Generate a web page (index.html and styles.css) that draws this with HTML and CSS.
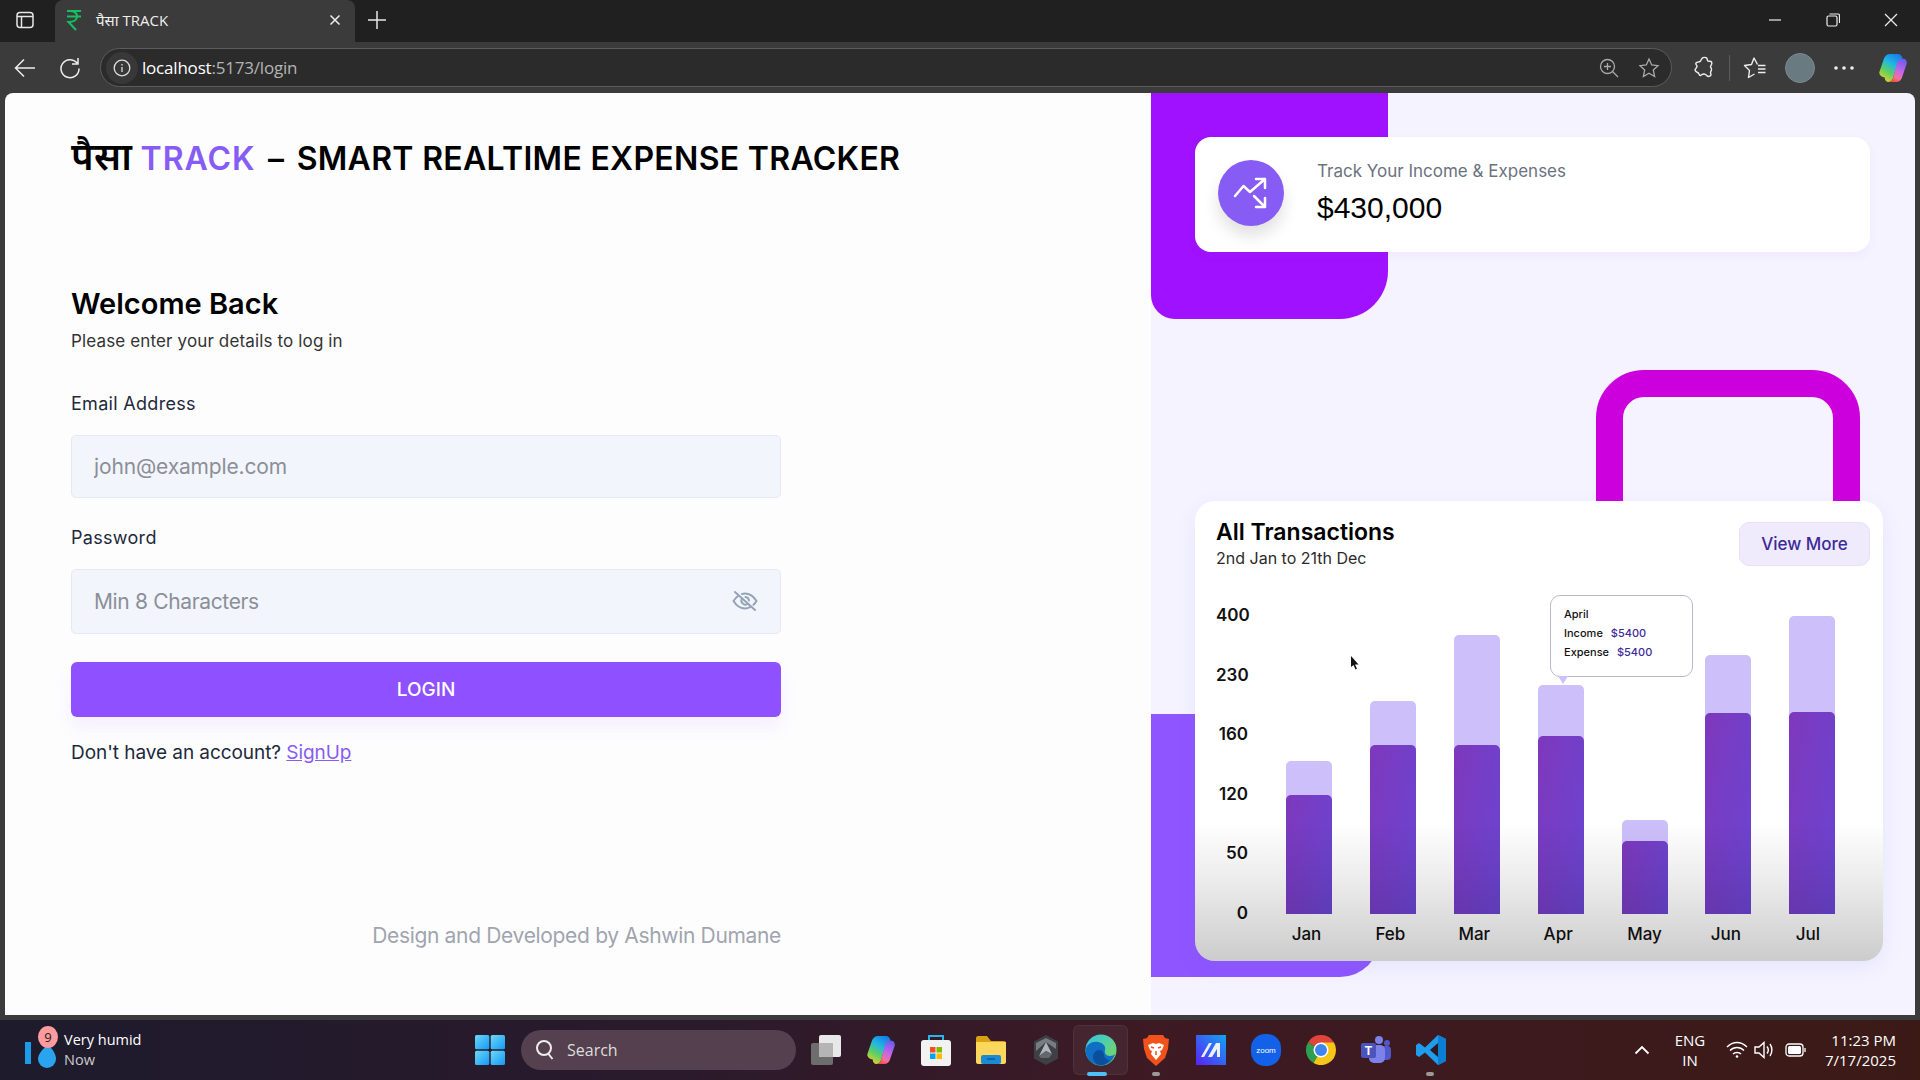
FILE: index.html
```html
<!DOCTYPE html>
<html lang="en">
	<head>
		<meta charset="UTF-8" />
		<title>पैसा TRACK</title>
		<link rel="stylesheet" href="styles.css">
	</head>
	<body>
		<svg class="defs" width="0" height="0">
			<defs>
				<linearGradient id="copilotA" x1="0.7" y1="0" x2="0.2" y2="1">
					<stop offset="0" stop-color="#1681ea" />
					<stop offset=".35" stop-color="#22b8e0" />
					<stop offset=".65" stop-color="#5fd060" />
					<stop offset="1" stop-color="#f2cf2a" />
				</linearGradient>
				<linearGradient id="copilotB" x1="0.7" y1="0" x2="0.3" y2="1">
					<stop offset="0" stop-color="#6a5cf0" />
					<stop offset=".5" stop-color="#c766e6" />
					<stop offset=".8" stop-color="#f2709a" />
					<stop offset="1" stop-color="#f2503a" />
				</linearGradient>
				<linearGradient id="edgeA" x1="0" y1="0" x2="1" y2="1">
					<stop offset="0" stop-color="#2fc4e8" />
					<stop offset="1" stop-color="#7ed957" />
				</linearGradient>
				<linearGradient id="winA" x1="0" y1="0" x2="1" y2="1">
					<stop offset="0" stop-color="#6fd8f7" />
					<stop offset="1" stop-color="#1299f5" />
				</linearGradient>
				<linearGradient id="mApp" x1="1" y1="0" x2="0" y2="1">
					<stop offset="0" stop-color="#12a4f2" />
					<stop offset="1" stop-color="#5a22f5" />
				</linearGradient>
				<symbol id="copilot" viewBox="0 0 30 32">
					<path d="M12 1h8c3 0 5 2 5.500 6L24 8c-2 0-4 1.500-4.500 4L15 27c-.5 2-2 4-5 4-2 0-3.500-1.500-4-4.500L6 26c-3 0-6.500-2.500-5.500-6L5 7c1-4 3.500-6 7-6z" fill="url(#copilotA)" />
					<path d="M18 31h-8c3 0 4.500-2 5-4l4.500-17c.5-2.500 2.500-4 4.500-4h2c3 0 4.500 3 3.500 6L25 25c-1 4-3.500 6-7 6z" fill="url(#copilotB)" />
				</symbol>
			</defs>
		</svg>

		<div class="tabstrip">
			<svg class="sidebar-icon" width="20" height="20" viewBox="0 0 20 20" fill="none" stroke="#e6e6e6" stroke-width="1.500">
				<rect x="2" y="2.500" width="16" height="15" rx="3" />
				<path d="M2 6.500h16M6.500 6.500v11" />
			</svg>
			<div class="tab">
				<svg width="16" height="22" viewBox="0 0 16 22" fill="none" stroke="#16c060" stroke-width="2">
					<path d="M1 2h14M1 7.500h14M4 2c6 0 7 2.500 7 5.500S8 13 2.500 13L10 21" />
				</svg>
				<span class="tab-title">पैसा TRACK</span>
				<svg class="tab-close" width="12" height="12" viewBox="0 0 12 12" stroke="#eee" stroke-width="1.500">
					<path d="M1.500 1.500l9 9M10.500 1.500l-9 9" />
				</svg>
			</div>
			<svg class="new-tab" width="20" height="20" viewBox="0 0 20 20" stroke="#e6e6e6" stroke-width="1.500">
				<path d="M10 1v18M1 10h18" />
			</svg>
			<div class="win-controls">
				<svg width="14" height="14" viewBox="0 0 14 14" stroke="#eee" stroke-width="1.200"><path d="M1 7h12" /></svg>
				<svg width="14" height="14" viewBox="0 0 14 14" fill="none" stroke="#eee" stroke-width="1.200"><rect x="1" y="3" width="10" height="10" rx="1.500" /><path d="M3.500 1H12c.8 0 1.500.7 1.500 1.500V10" /></svg>
				<svg width="14" height="14" viewBox="0 0 14 14" stroke="#eee" stroke-width="1.200"><path d="M1 1l12 12M13 1L1 13" /></svg>
			</div>
		</div>

		<div class="toolbar">
			<svg class="tool-back" width="22" height="20" viewBox="0 0 22 20" fill="none" stroke="#eee" stroke-width="1.500"><path d="M21 10H2M10 1.500L1.500 10l8.500 8.500" /></svg>
			<svg class="tool-reload" width="22" height="22" viewBox="0 0 22 22" fill="none" stroke="#eee" stroke-width="1.500"><path d="M18 6a9 9 0 1 0 2 5.500M19 1v6h-6" /></svg>
			<div class="address">
				<span class="site-info">
					<svg width="18" height="18" viewBox="0 0 18 18" fill="none" stroke="#ddd" stroke-width="1.300"><circle cx="9" cy="9" r="7.800" /><path d="M9 8v5M9 5v1.500" /></svg>
				</span>
				<span class="url"><b>localhost</b>:5173/login</span>
				<svg class="addr-zoom" width="20" height="20" viewBox="0 0 20 20" fill="none" stroke="#aaa" stroke-width="1.300"><circle cx="8.500" cy="8.500" r="7" /><path d="M13.500 13.500L19 19M8.500 5v7M5 8.500h7" /></svg>
				<svg class="addr-star" width="22" height="22" viewBox="0 0 22 22" fill="none" stroke="#aaa" stroke-width="1.300"><path d="M11 2l2.700 6 6.300.7-4.700 4.300 1.300 6.500L11 16.200 5.400 19.500 6.700 13 2 8.700 8.300 8z" /></svg>
			</div>
			<svg class="tool-ext" width="22" height="24" viewBox="0 0 22 24" fill="none" stroke="#eee" stroke-width="1.400"><path d="M9 2.500c1-1.500 4-1.500 5 0 .5 1 0 2 1 2.500l3 .5c1 .5 1 2 .5 3l-1 2c0 1 1 1.500 1 3s-1 2-1 3l.5 2.500c-.5 1.500-2 1.500-3 1.500-1.500-1-2-2.500-4-2.500s-2.500 1-3.500 1.500C6 19.500 6 18 5.500 17c-1-.5-3-1-3.500-3 0-1.500 2-2 2-3.500S2 8.500 3 7c1-1 3-1 4-1.500 1-.5 1-2 2-3z" /></svg>
			<span class="tool-sep"></span>
			<svg class="tool-fav" width="24" height="24" viewBox="0 0 24 24" fill="none" stroke="#eee" stroke-width="1.400" stroke-linejoin="round"><path d="M14.500 8.500L11 2 8.500 8.500l-7 1 5 5-1 7 6-3.500" /><path d="M15 9.500h7.500M15 13h7.500M15 16.500h7.500" /></svg>
			<span class="avatar"></span>
			<svg class="tool-dots" width="22" height="6" viewBox="0 0 22 6" fill="#eee"><circle cx="3" cy="3" r="1.800" /><circle cx="11" cy="3" r="1.800" /><circle cx="19" cy="3" r="1.800" /></svg>
			<svg class="tool-copilot" width="28" height="30"><use href="#copilot" /></svg>
		</div>

		<div class="viewport">
			<main class="login-pane">
				<h1 class="brand"><span class="brand-hi">पैसा</span> <span class="brand-accent">TRACK</span> <span class="brand-dash">–</span> SMART REALTIME EXPENSE TRACKER</h1>
				<form class="login-form">
					<h2>Welcome Back</h2>
					<p class="subtitle">Please enter your details to log in</p>

					<label class="field-label first" for="email">Email Address</label>
					<input class="field" id="email" type="text" placeholder="john@example.com">

					<label class="field-label" for="password">Password</label>
					<div class="field-wrap">
						<input class="field tall" id="password" type="text" placeholder="Min 8 Characters">
						<svg class="eye" width="28" height="24" viewBox="0 0 28 24" fill="none" stroke="#94a3b8" stroke-width="2" stroke-linecap="round">
							<path d="M4 3l20 18" />
							<path d="M7 7c-2 1.500-3.500 3.500-4.500 5C5 16 9 19.500 14 19.500c2 0 3.500-.5 5-1.300M11 5c1-.3 2-.5 3-.5 5 0 9 3.500 11.500 7.500-.7 1.200-1.700 2.500-3 3.700" />
							<path d="M11 9.500a4 4 0 0 0 5.500 5.500M14.500 8a4 4 0 0 1 3.500 3.500" />
						</svg>
					</div>

					<button class="login-btn" type="button">LOGIN</button>
					<p class="signup">Don't have an account? <a href="#">SignUp</a></p>
					<p class="credit">Design and Developed by Ashwin Dumane</p>
				</form>
			</main>

			<aside class="promo-pane">
				<div class="shape shape-top"></div>
				<div class="shape shape-ring"></div>
				<div class="shape shape-bottom"></div>

				<div class="summary-card">
					<div class="summary-icon">
						<svg width="66" height="66" viewBox="0 0 66 66" fill="none" stroke="#fff" stroke-width="2.500" stroke-linecap="round" stroke-linejoin="round">
							<path d="M17 36l8.500-10 6.500 6 15-13M38 19h9v9" />
							<path d="M36 36l11 11M47 38v9h-9" />
						</svg>
					</div>
					<div class="summary-text">
						<div class="summary-label">Track Your Income &amp; Expenses</div>
						<div class="summary-value">$430,000</div>
					</div>
				</div>

				<section class="chart-card">
					<div class="chart-head">
						<div>
							<h3>All Transactions</h3>
							<p>2nd Jan to 21th Dec</p>
						</div>
						<button class="view-more" type="button">View More</button>
					</div>

					<div class="chart-body">
						<div class="y-axis">
							<span>400</span><span>230</span><span>160</span><span>120</span><span>50</span><span>0</span>
						</div>
						<div class="plot">
							<div class="bar" style="height: 153px"><div class="bar-fill" style="height: 119px"></div></div>
							<div class="bar" style="height: 213px"><div class="bar-fill" style="height: 169px"></div></div>
							<div class="bar" style="height: 279px"><div class="bar-fill" style="height: 169px"></div></div>
							<div class="bar" style="height: 229px"><div class="bar-fill" style="height: 178px"></div></div>
							<div class="bar" style="height: 94px"><div class="bar-fill" style="height: 73px"></div></div>
							<div class="bar" style="height: 259px"><div class="bar-fill" style="height: 201px"></div></div>
							<div class="bar" style="height: 298px"><div class="bar-fill" style="height: 202px"></div></div>
						</div>
						<div class="months">
							<span>Jan</span><span>Feb</span><span>Mar</span><span>Apr</span><span class="month-may">May</span><span>Jun</span><span class="month-jul">Jul</span>
						</div>
					</div>

					<div class="chart-tip">
						<div>April</div>
						<div>Income <b>$5400</b></div>
						<div>Expense <b>$5400</b></div>
					</div>
					<svg class="pointer" width="10" height="14" viewBox="0 0 10 14"><path d="M1 0v11l2.500-2 2 4.500 1.500-.7-2-4.300h3.500z" fill="#111" /></svg>
					<div class="chart-fade"></div>
				</section>
			</aside>
		</div>
		<div class="window-edge"></div>

		<footer class="taskbar">
			<div class="weather">
				<svg width="36" height="36" viewBox="0 0 36 36">
					<rect x="1" y="10" width="6" height="22" fill="#1b9be8" />
					<path d="M24 12c5 6 8 10 8 15a9 9 0 0 1-18 0c0-5 4-9 10-15z" fill="#2aa4ee" />
				</svg>
				<span class="weather-badge">9</span>
				<div class="weather-text">
					<div>Very humid</div>
					<div class="weather-sub">Now</div>
				</div>
			</div>

			<svg class="start" width="30" height="30" viewBox="0 0 30 30">
				<rect width="14.300" height="14.300" rx="1.500" fill="url(#winA)" />
				<rect x="15.700" width="14.300" height="14.300" rx="1.500" fill="url(#winA)" />
				<rect y="15.700" width="14.300" height="14.300" rx="1.500" fill="url(#winA)" />
				<rect x="15.700" y="15.700" width="14.300" height="14.300" rx="1.500" fill="url(#winA)" />
			</svg>

			<div class="search">
				<svg width="20" height="22" viewBox="0 0 20 22" fill="none" stroke="#eee" stroke-width="2"><circle cx="9" cy="9" r="7" /><path d="M13.500 15l4 5" /></svg>
				<span>Search</span>
			</div>

			<div class="apps">
				<span class="app">
					<svg width="32" height="32" viewBox="0 0 32 32"><rect x="1" y="9" width="22" height="22" rx="2" fill="#6d6d6d" /><rect x="9" y="1" width="22" height="22" rx="2" fill="#e8e8e8" /><rect x="9" y="9" width="14" height="14" fill="#b5b5b5" /></svg>
				</span>
				<span class="app"><svg width="28" height="30"><use href="#copilot" /></svg></span>
				<span class="app">
					<svg width="30" height="32" viewBox="0 0 30 32"><path d="M8 6V2h14v4" fill="none" stroke="#25b7ea" stroke-width="2" /><rect y="6" width="30" height="26" rx="3" fill="#f2f2f2" /><rect x="9" y="13" width="5.500" height="5.500" fill="#f25022" /><rect x="15.500" y="13" width="5.500" height="5.500" fill="#7fba00" /><rect x="9" y="19.500" width="5.500" height="5.500" fill="#00a4ef" /><rect x="15.500" y="19.500" width="5.500" height="5.500" fill="#ffb900" /></svg>
				</span>
				<span class="app">
					<svg width="30" height="28" viewBox="0 0 30 28"><path d="M0 2c0-1 1-2 2-2h9l4 5h13c1 0 2 1 2 2v4H0z" fill="#d9a213" /><path d="M0 6h30v20c0 1-1 2-2 2H2c-1 0-2-1-2-2z" fill="#fbd75b" /><rect x="5" y="19" width="20" height="9" rx="2" fill="#1a8ad4" /><path d="M11 23h8" stroke="#0d5a96" stroke-width="1.500" /></svg>
				</span>
				<span class="app">
					<svg width="26" height="30" viewBox="0 0 26 30"><path d="M13 0l12 6.500v17L13 30 1 23.500v-17z" fill="#3d4146" /><path d="M13 3l10 5v6L13 7 3 16V8z" fill="#777c82" /><path d="M13 7l6 12-6-3-7 5z" fill="#b0b5ba" /><path d="M13 16l6 3-3 4H8l-2-2z" fill="#63686e" /></svg>
				</span>
				<span class="app active">
					<svg width="32" height="32" viewBox="0 0 32 32">
						<circle cx="16" cy="16" r="15.500" fill="url(#edgeA)" />
						<path d="M1 15C2 7 9 1 16 1c7 0 13 4 15 11 1 5-3 8-8 7-2-.5-3-3-1-5-3-4-9-4-13-1-5 3-6 8-3 13C3 24 0 20 1 15z" fill="url(#edgeA)" />
						<path d="M.5 16C2 10 7 7 13 8c5 1 8 4 7 8-1 3 1 6 5 6 2 0 4-1 5-2-2 7-8 11.500-14 11.500C8 31.500.5 25 .5 16z" fill="#0f6fc4" />
						<path d="M14 16c3 0 5 2 5 5 0 3 3 5 6 5-3 3.500-6 5-9 5-5 0-8-4-8-8s3-7 6-7z" fill="#0b4f9c" />
					</svg>
				</span>
				<span class="app">
					<svg width="28" height="32" viewBox="0 0 28 32"><path d="M7 1h14l2 3 4 1-1 10-3 9-9 8-9-8-3-9L1 5l4-1z" fill="#f1511b" /><path d="M6 11l5-2 3 1 3-1 5 2-2 5-2 1 1 3-5 6-5-6 1-3-2-1z" fill="#fff" /><path d="M9 13l3 1M19 13l-3 1M14 17v4" stroke="#f1511b" stroke-width="1.500" /></svg>
				</span>
				<span class="app">
					<svg width="30" height="30" viewBox="0 0 30 30"><rect width="30" height="30" fill="url(#mApp)" /><path d="M5 22L13 8h3L8 22zM12 22l8-14h4v14h-3V14l-5 8z" fill="#fff" opacity=".9" /></svg>
				</span>
				<span class="app">
					<svg width="30" height="32" viewBox="0 0 30 32"><rect width="30" height="32" rx="14" fill="#1261e8" /><text x="15" y="19" text-anchor="middle" class="zoom-word">zoom</text></svg>
				</span>
				<span class="app">
					<svg width="30" height="30" viewBox="0 0 30 30">
						<path d="M15 15L2 7.500A15 15 0 0 1 28 7.500z" fill="#e0443a" />
						<path d="M15 15l-7.500 13A15 15 0 0 1 2 7.500z" fill="#2e9e4f" />
						<path d="M15 15h15a15 15 0 0 1-22.500 13z" fill="#f5c518" />
						<path d="M15 7.500h13A15 15 0 0 1 30 15H15z" fill="#f5c518" />
						<circle cx="15" cy="15" r="7.500" fill="#fff" />
						<circle cx="15" cy="15" r="6" fill="#3f85f0" />
					</svg>
				</span>
				<span class="app">
					<svg width="30" height="30" viewBox="0 0 30 30"><circle cx="18" cy="5" r="4" fill="#7b83eb" /><circle cx="26" cy="8" r="3" fill="#5059c9" /><rect x="14" y="11" width="16" height="14" rx="4" fill="#5059c9" /><rect x="8" y="10" width="16" height="18" rx="5" fill="#7b83eb" /><rect y="8" width="15" height="15" rx="2" fill="#4b53bc" /><text x="7.500" y="20" text-anchor="middle" class="teams-t">T</text></svg>
				</span>
				<span class="app">
					<svg width="30" height="30" viewBox="0 0 30 30"><path d="M22 0l8 4v22l-8 4L9 17.500 3 22 0 20v-10l3-2 6 4.500z" fill="#1f9cf0" /><path d="M22 8l-8 7 8 7z" fill="#2a1a1e" /><path d="M22 0l8 4v22l-8 4z" fill="#0a7fd1" /></svg>
				</span>
				<span class="app-dot dot-edge"></span>
				<span class="app-dot dot-brave"></span>
				<span class="app-dot dot-code"></span>
			</div>

			<div class="tray">
				<svg class="tray-caret" width="16" height="10" viewBox="0 0 16 10" fill="none" stroke="#fff" stroke-width="1.800"><path d="M1.500 8.500L8 2l6.500 6.500" /></svg>
				<div class="tray-lang"><div>ENG</div><div>IN</div></div>
				<svg class="tray-wifi" width="22" height="18" viewBox="0 0 22 18" fill="none" stroke="#fff" stroke-width="1.500"><path d="M1 6c6-6 14-6 20 0M4 9.500c4-4 10-4 14 0M7 13c2-2 6-2 8 0" /><circle cx="11" cy="15.500" r="1.300" fill="#fff" stroke="none" /></svg>
				<svg class="tray-vol" width="22" height="18" viewBox="0 0 22 18" fill="none" stroke="#fff" stroke-width="1.400"><path d="M1 6v6h4l5 4.500V1.500L5 6z" /><path d="M13 5.500c1.500 2 1.500 5 0 7M16 3c2.500 3.500 2.500 8.500 0 12" /></svg>
				<svg width="21" height="14" viewBox="0 0 21 14" fill="none" stroke="#fff" stroke-width="1.300"><rect x="1" y="1" width="17" height="12" rx="3" /><rect x="3" y="3" width="13" height="8" rx="1.500" fill="#fff" stroke="none" /><path d="M20 5v4" /></svg>
				<div class="tray-clock"><div>11:23 PM</div><div>7/17/2025</div></div>
			</div>
		</footer>
	</body>
</html>
```

FILE: styles.css
```css
* {
	box-sizing: border-box;
}
html,
body {
	height: 1080px;
	margin: 0;
	overflow: hidden;
}
body {
	display: flex;
	flex-direction: column;
	background: #3b3b3b;
	font-family: Inter, "Noto Sans", "Noto Sans Devanagari", sans-serif;
}
.defs {
	position: absolute;
}

/* browser frame */
.tabstrip {
	display: flex;
	align-items: center;
	height: 42px;
	background: #202020;
}
.sidebar-icon {
	margin: 0 20px 3px 15px;
}
.tab {
	display: flex;
	align-items: center;
	width: 300px;
	height: 42px;
	padding: 0 14px 3px 11px;
	background: #3b3b3b;
	border-radius: 8px 8px 0 0;
}
.tab-title {
	margin-left: 14px;
	font-family: "Open Sans", "Noto Sans", sans-serif;
	font-size: 15px;
	color: #eee;
}
.tab-close {
	margin-left: auto;
}
.new-tab {
	margin: 0 0 3px 12px;
}
.win-controls {
	display: flex;
	gap: 44px;
	margin: 0 0 3px auto;
	padding-right: 22px;
}
.toolbar {
	display: flex;
	align-items: center;
	height: 51px;
	padding-left: 14px;
}
.tool-reload {
	margin-left: 23px;
}
.address {
	display: flex;
	align-items: center;
	width: 1572px;
	height: 39px;
	margin-left: 19px;
	padding: 0 11px 0 5px;
	background: #2b2b2b;
	border: 1.500px solid #5c5c5c;
	border-radius: 20px;
}
.site-info {
	display: flex;
	align-items: center;
	justify-content: center;
	width: 32px;
	height: 32px;
	background: #383838;
	border-radius: 50%;
}
.url {
	margin-left: 4px;
	font-family: "Open Sans", "Noto Sans", sans-serif;
	font-size: 17px;
	letter-spacing: -0.2px;
	color: #b4b4b4;
}
.url b {
	font-weight: 400;
	color: #fff;
}
.addr-zoom {
	margin-left: auto;
}
.addr-star {
	margin-left: 19px;
}
.tool-ext {
	margin-left: 21px;
}
.tool-sep {
	width: 1px;
	height: 26px;
	margin-left: 14px;
	background: #5c5c5c;
}
.tool-fav {
	margin-left: 13px;
}
.avatar {
	width: 30px;
	height: 30px;
	margin-left: 18px;
	background: #697a80;
	border: 1px solid #7d8b90;
	border-radius: 50%;
}
.tool-dots {
	margin-left: 18px;
}
.tool-copilot {
	margin-left: 24px;
}

/* page */
.viewport {
	display: flex;
	flex: none;
	height: 922px;
	margin: 0 5px;
	overflow: hidden;
	border-radius: 8px 8px 0 0;
}
.window-edge {
	height: 5px;
}
.login-pane {
	width: 1146px;
	padding: 41px 0 0 66px;
	background: #fdfdfe;
}
.brand {
	margin: 0;
	font-size: 32px;
	font-weight: 600;
	line-height: 50px;
	letter-spacing: 0.3px;
	color: #000;
}
.brand-hi {
	font-size: 38px;
	line-height: 40px;
}
.brand-accent {
	letter-spacing: 1px;
	color: #875cf5;
}
.brand-dash {
	margin: 0 4px;
}
.login-form {
	width: 710px;
}
.login-form h2 {
	margin: 102px 0 0;
	font-size: 29px;
	font-weight: 600;
	line-height: 36px;
	color: #000;
}
.subtitle {
	margin: 7px 0 0;
	font-size: 17px;
	line-height: 24px;
	letter-spacing: 0.14px;
	color: #333;
}
.field-label {
	display: block;
	margin-top: 28px;
	font-size: 18px;
	line-height: 24px;
	letter-spacing: 0.3px;
	color: #1e293b;
}
.field-label.first {
	margin-top: 39px;
}
.field {
	display: block;
	width: 100%;
	height: 63px;
	margin-top: 19px;
	padding: 0 22px;
	background: #f2f5fb;
	border: 1.500px solid #e5e9f2;
	border-radius: 5px;
	font-family: inherit;
	font-size: 21px;
	letter-spacing: -0.15px;
	outline: none;
}
.field.tall {
	height: 65px;
	letter-spacing: -0.35px;
}
.field::placeholder {
	color: #8b8f98;
	opacity: 1;
}
.field-wrap {
	position: relative;
}
.eye {
	position: absolute;
	top: 20px;
	right: 22px;
}
.login-btn {
	display: block;
	width: 100%;
	height: 55px;
	margin-top: 28px;
	background: #8f51ff;
	border: 0;
	border-radius: 6px;
	box-shadow: 0 10px 18px rgba(143, 81, 255, 0.08);
	font-family: inherit;
	font-size: 19px;
	font-weight: 500;
	color: #fff;
}
.signup {
	margin: 24px 0 0;
	font-size: 19px;
	line-height: 24px;
	letter-spacing: -0.06px;
	color: #1e293b;
}
.signup a {
	color: #875cf5;
}
.credit {
	margin: 159px 0 0;
	font-size: 21px;
	line-height: 24px;
	letter-spacing: -0.33px;
	text-align: right;
	color: #a0a4ae;
}

/* right side */
.promo-pane {
	position: relative;
	flex: 1;
	padding: 44px 0 0 44px;
	background: #f5f3ff;
	overflow: hidden;
}
.shape {
	position: absolute;
}
.shape-top {
	top: 0;
	left: 0;
	width: 237px;
	height: 226px;
	background: #9f11ff;
	border-radius: 0 0 48px 24px;
}
.shape-ring {
	top: 277px;
	left: 445px;
	width: 264px;
	height: 300px;
	border: 27px solid #cc00dd;
	border-radius: 48px;
}
.shape-bottom {
	top: 621px;
	left: 0;
	width: 229px;
	height: 263px;
	background: #8f55ff;
	border-radius: 0 0 40px 0;
}
.summary-card {
	position: relative;
	display: flex;
	align-items: center;
	width: 675px;
	height: 115px;
	padding-left: 23px;
	background: #fff;
	border-radius: 16px;
	box-shadow: 0 4px 10px rgba(135, 92, 245, 0.06);
}
.summary-icon {
	width: 66px;
	height: 66px;
	margin: 0 33px 3px 0;
	background: #875cf5;
	border-radius: 50%;
	box-shadow: 0 10px 16px rgba(0, 0, 0, 0.12);
}
.summary-text {
	margin-bottom: 4px;
}
.summary-label {
	font-size: 17px;
	line-height: 24px;
	color: #6b7280;
}
.summary-value {
	margin-top: 7px;
	font-family: "Liberation Sans", Arial, sans-serif;
	font-size: 30px;
	line-height: 36px;
	color: #000;
}
.chart-card {
	position: relative;
	width: 688px;
	height: 460px;
	margin-top: 249px;
	padding: 16px 13px 0 21px;
	overflow: hidden;
	background: #fff;
	border-radius: 20px;
	box-shadow: 0 6px 20px rgba(100, 110, 255, 0.1);
}
.chart-head {
	display: flex;
	align-items: flex-start;
	justify-content: space-between;
	height: 53px;
}
.chart-head h3 {
	margin: 0;
	font-size: 23px;
	font-weight: 600;
	line-height: 30px;
	color: #000;
}
.chart-head p {
	margin: 0;
	font-size: 16px;
	line-height: 22px;
	color: #2d2a2a;
}
.view-more {
	width: 131px;
	height: 44px;
	margin-top: 5px;
	background: #efeafc;
	border: 1px solid #e6e2f6;
	border-radius: 10px;
	font-family: inherit;
	font-size: 17px;
	font-weight: 500;
	color: #3d2a9a;
}
.chart-body {
	display: grid;
	grid-template-columns: 32px 1fr;
	margin-top: 35px;
}
.y-axis {
	display: flex;
	flex-direction: column;
	justify-content: space-between;
	height: 318px;
	margin-bottom: -9px;
	font-size: 17px;
	font-weight: 600;
	line-height: 20px;
	text-align: right;
	color: #111;
}
.plot {
	display: flex;
	align-items: flex-end;
	gap: 37.900px;
	height: 309px;
	margin-left: 38px;
	align-self: start;
}
.months {
	display: flex;
	gap: 37.900px;
	grid-column: 2;
	margin: 9px 0 0 38px;
	font-size: 17px;
	font-weight: 500;
	line-height: 22px;
	color: #111;
}
.months span {
	width: 46px;
	padding-right: 5px;
	text-align: center;
}
.months .month-may {
	padding-right: 0;
}
.months .month-jul {
	padding-right: 9px;
}
.bar {
	display: flex;
	align-items: flex-end;
	width: 46px;
	background: #cdbffa;
	border-radius: 5px 5px 0 0;
}
.bar-fill {
	width: 100%;
	background: linear-gradient(100deg, #7e38bc, #6a45d2);
	border-radius: 5px 5px 0 0;
}
.chart-tip {
	position: absolute;
	top: 94px;
	left: 355px;
	width: 143px;
	height: 82px;
	padding: 9px 0 0 13px;
	background: #fff;
	border: 1px solid #bdb8d0;
	border-radius: 10px;
	font-size: 11px;
	font-weight: 500;
	line-height: 19px;
	color: #111;
}
.chart-tip b {
	margin-left: 5px;
	font-weight: 500;
	color: #3d2a9a;
}
.chart-tip::after {
	content: "";
	position: absolute;
	bottom: -8px;
	left: 7px;
	border-top: 8px solid #cdbffa;
	border-left: 5px solid transparent;
	border-right: 5px solid transparent;
}
.pointer {
	position: absolute;
	top: 155px;
	left: 155px;
}
.chart-fade {
	position: absolute;
	left: 0;
	right: 0;
	bottom: 0;
	height: 140px;
	background: linear-gradient(rgba(0, 0, 0, 0), rgba(0, 0, 0, 0.07) 40%, rgba(0, 0, 0, 0.2));
	pointer-events: none;
}

/* windows taskbar */
.taskbar {
	position: relative;
	display: flex;
	align-items: center;
	flex: 1;
	background: linear-gradient(90deg, #1d1b2c, #2a1a2c 35%, #3d1a24 60%, #3b1a16);
	font-family: "Open Sans", "Noto Sans", sans-serif;
	color: #fff;
}
.weather {
	position: relative;
	display: flex;
	align-items: center;
	width: 475px;
	padding-left: 24px;
}
.weather-badge {
	position: absolute;
	top: -4px;
	left: 38px;
	width: 20px;
	height: 22px;
	background: #ff9a9e;
	border-radius: 50%;
	font-size: 13px;
	line-height: 22px;
	text-align: center;
	color: #222;
}
.weather-text {
	margin-left: 4px;
	font-size: 14.500px;
	line-height: 20px;
}
.weather-sub {
	color: #ccc;
}
.search {
	display: flex;
	align-items: center;
	gap: 12px;
	width: 275px;
	height: 40px;
	margin-left: 16px;
	padding-left: 14px;
	background: #54404e;
	border-radius: 20px;
	font-size: 16px;
	color: #ddd;
}
.apps {
	position: relative;
	display: flex;
	margin-left: 2px;
	height: 60px;
	align-items: center;
}
.app {
	display: flex;
	align-items: center;
	justify-content: center;
	width: 55px;
	height: 50px;
}
.app.active {
	background: rgba(255, 255, 255, 0.05);
	border: 1px solid rgba(255, 255, 255, 0.06);
	border-radius: 6px;
}
.app-dot {
	position: absolute;
	bottom: 4px;
	width: 8px;
	height: 4px;
	background: #9a9a9a;
	border-radius: 2px;
}
.dot-edge {
	left: 289px;
	width: 20px;
	background: #4fc0f5;
}
.dot-brave {
	left: 354px;
}
.dot-code {
	left: 628px;
}
.zoom-word {
	font-family: "Liberation Sans", Arial, sans-serif;
	font-size: 8px;
	fill: #fff;
}
.teams-t {
	font-family: "Liberation Sans", Arial, sans-serif;
	font-size: 12px;
	font-weight: 700;
	fill: #fff;
}
.tray {
	display: flex;
	align-items: center;
	margin-left: auto;
	padding-right: 24px;
	font-size: 15px;
	line-height: 20px;
}
.tray-caret {
	margin-right: 22px;
}
.tray-lang {
	width: 36px;
	margin-right: 18px;
	text-align: center;
}
.tray-wifi {
	margin-right: 6px;
}
.tray-vol {
	margin-right: 9px;
}
.tray-clock {
	width: 90px;
	text-align: right;
}
```
